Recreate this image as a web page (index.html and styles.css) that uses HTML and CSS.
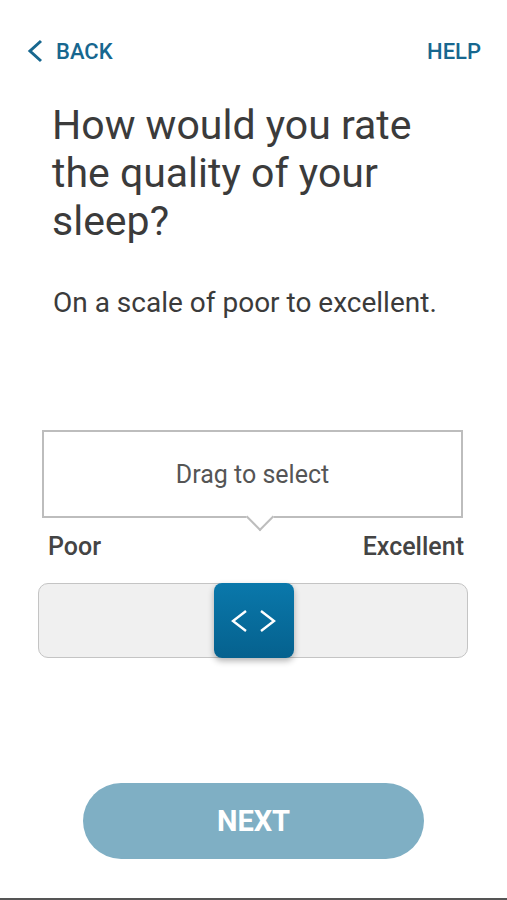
FILE: index.html
```html
<html lang="en">
<head>
    <meta charset="UTF-8">
    <meta name="viewport" content="width=device-width, initial-scale=1.0">
    <title>Sleep Quality</title>
    <link rel="stylesheet" href="styles.css">
</head>
<body>

    <div class="screen">
        <header class="top-bar">
            <a class="nav-link back" href="#">
                <svg class="chevron" width="18" height="24" viewBox="0 0 18 24">
                    <path d="M15 2 L4 12 L15 22" fill="none" stroke="currentColor" stroke-width="3"/>
                </svg>
                BACK
            </a>
            <a class="nav-link" href="#">HELP</a>
        </header>

        <h1 class="question">How would you rate the quality of your sleep?</h1>
        <p class="hint">On a scale of poor to excellent.</p>

        <div class="tooltip">Drag to select</div>

        <div class="scale-labels">
            <span>Poor</span>
            <span>Excellent</span>
        </div>

        <div class="track">
            <div class="thumb" style="left: 175px;">
                <svg width="48" height="22" viewBox="0 0 48 22">
                    <path d="M16 1 L3 11 L16 21" fill="none" stroke="#fff" stroke-width="2.4"/>
                    <path d="M31 1 L44 11 L31 21" fill="none" stroke="#fff" stroke-width="2.4"/>
                </svg>
            </div>
        </div>

        <button class="next">NEXT</button>
    </div>

    <div class="bottom-line"></div>
</body>
</html>
```

FILE: styles.css
```css
:root {
    --blue: #17678f;
    --text: #3b3b3b;
    --border: #bdbdbd;
}

body {
    margin: 0;
    font-family: Roboto, 'Liberation Sans', sans-serif;
    color: var(--text);
    background: #fff;
}

.screen {
    height: 898px;
    overflow: hidden;
}

.top-bar {
    display: flex;
    justify-content: space-between;
    align-items: center;
    margin-top: 30px;
    height: 42px;
    padding: 0 26px;
}

.nav-link {
    display: flex;
    align-items: center;
    color: var(--blue);
    text-decoration: none;
    font-size: 22px;
    font-weight: 500;
}

.chevron {
    margin-right: 12px;
}

.question {
    margin: 29px 0 0 52px;
    width: 370px;
    font-size: 41px;
    line-height: 48px;
    font-weight: 400;
}

.hint {
    margin: 41px 0 0 53px;
    font-size: 28px;
    line-height: 34px;
}

.tooltip {
    position: relative;
    margin: 110px 44px 0 42px;
    height: 84px;
    border: 2px solid var(--border);
    display: flex;
    align-items: center;
    justify-content: center;
    font-size: 25px;
    color: #555;
}

.tooltip::after {
    content: '';
    position: absolute;
    left: 206px;
    bottom: -11px;
    width: 18px;
    height: 18px;
    background: #fff;
    border-right: 2px solid var(--border);
    border-bottom: 2px solid var(--border);
    transform: rotate(45deg);
}

.scale-labels {
    display: flex;
    justify-content: space-between;
    margin: 14px 43px 0 48px;
    font-size: 25px;
    font-weight: 500;
    line-height: 30px;
    color: #444;
}

.track {
    position: relative;
    margin: 21px 39px 0 38px;
    height: 73px;
    background: #f0f0f0;
    border: 1px solid #c4c4c4;
    border-radius: 10px;
}

.thumb {
    position: absolute;
    top: -1px;
    width: 80px;
    height: 75px;
    border-radius: 8px;
    background: linear-gradient(#0a78ab, #05618e);
    box-shadow: 0 3px 6px rgba(0, 0, 0, 0.3);
    display: flex;
    align-items: center;
    justify-content: center;
}

.next {
    display: block;
    margin: 125px 0 0 83px;
    width: 341px;
    height: 76px;
    border: none;
    border-radius: 38px;
    background: #7fafc4;
    color: #fff;
    font-family: Roboto, 'Liberation Sans', sans-serif;
    font-size: 29px;
    font-weight: 700;
}

.bottom-line {
    height: 2px;
    background: #555;
}
```
